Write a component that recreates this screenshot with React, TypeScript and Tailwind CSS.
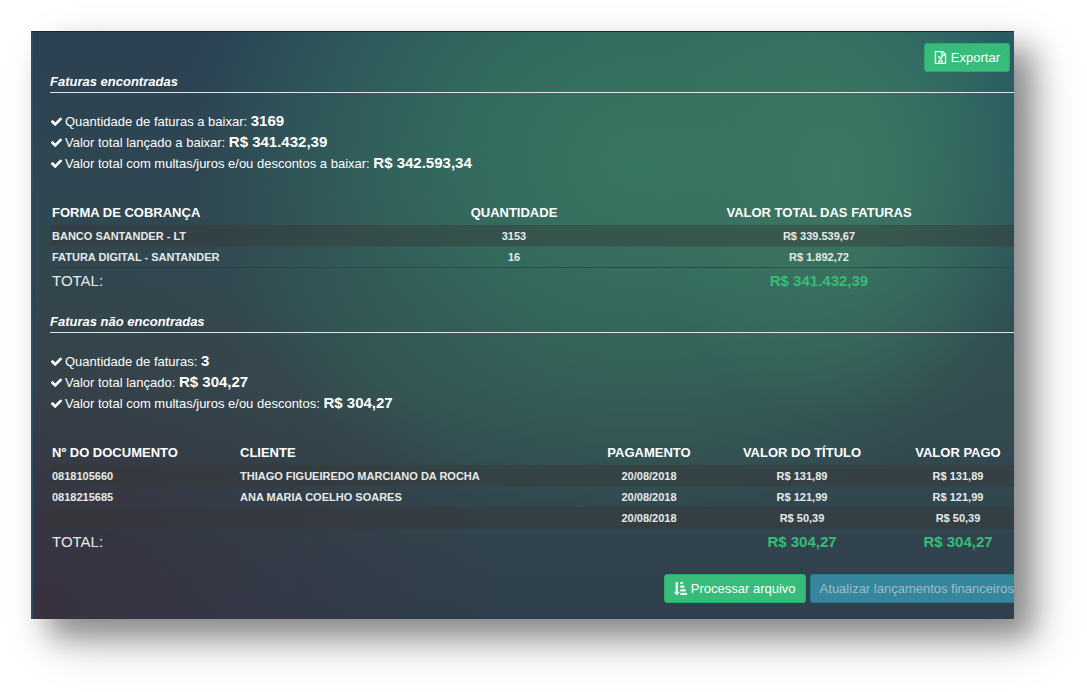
import { clsx } from "clsx";
import type { ComponentPropsWithoutRef, ReactNode } from "react";

interface SummaryItem {
	label: string;
	value: string;
}

interface Column {
	title: string;
	className: string;
	centered?: boolean;
}

interface InvoiceTableProps {
	columns: Column[];
	rows: string[][];
	totals: string[];
}

const foundSummary: SummaryItem[] = [
	{ label: "Quantidade de faturas a baixar:", value: "3169" },
	{ label: "Valor total lançado a baixar:", value: "R$ 341.432,39" },
	{
		label: "Valor total com multas/juros e/ou descontos a baixar:",
		value: "R$ 342.593,34",
	},
];

const foundColumns: Column[] = [
	{ title: "FORMA DE COBRANÇA", className: "w-auto" },
	{ title: "QUANTIDADE", className: "w-[220px]", centered: true },
	{ title: "VALOR TOTAL DAS FATURAS", className: "w-[390px]", centered: true },
];

const foundRows = [
	["BANCO SANTANDER - LT", "3153", "R$ 339.539,67"],
	["FATURA DIGITAL - SANTANDER", "16", "R$ 1.892,72"],
];

const missingSummary: SummaryItem[] = [
	{ label: "Quantidade de faturas:", value: "3" },
	{ label: "Valor total lançado:", value: "R$ 304,27" },
	{
		label: "Valor total com multas/juros e/ou descontos:",
		value: "R$ 304,27",
	},
];

const missingColumns: Column[] = [
	{ title: "Nº DO DOCUMENTO", className: "w-[188px]" },
	{ title: "CLIENTE", className: "w-auto" },
	{ title: "PAGAMENTO", className: "w-[106px]", centered: true },
	{ title: "VALOR DO TÍTULO", className: "w-[200px]", centered: true },
	{ title: "VALOR PAGO", className: "w-[112px]", centered: true },
];

const missingRows = [
	[
		"0818105660",
		"THIAGO FIGUEIREDO MARCIANO DA ROCHA",
		"20/08/2018",
		"R$ 131,89",
		"R$ 131,89",
	],
	[
		"0818215685",
		"ANA MARIA COELHO SOARES",
		"20/08/2018",
		"R$ 121,99",
		"R$ 121,99",
	],
	["", "", "20/08/2018", "R$ 50,39", "R$ 50,39"],
];

function Icon({ children }: { children: ReactNode }) {
	return (
		<svg
			viewBox="0 0 1792 1792"
			className="size-[13px] shrink-0 fill-current"
			aria-hidden="true"
		>
			{children}
		</svg>
	);
}

function CheckIcon() {
	return (
		<Icon>
			<path d="M1671 566q0 40-28 68l-724 724-136 136q-28 28-68 28t-68-28l-136-136-362-362q-28-28-28-68t28-68l136-136q28-28 68-28t68 28l294 295 656-657q28-28 68-28t68 28l136 136q28 28 28 68z" />
		</Icon>
	);
}

function ExcelIcon() {
	return (
		<Icon>
			<path
				className="stroke-current"
				strokeWidth="50"
				d="M1596 380q28 28 48 76t20 88v1152q0 40-28 68t-68 28h-1344q-40 0-68-28t-28-68v-1600q0-40 28-68t68-28h896q40 0 88 20t76 48zm-444-244v376h376q-10-29-22-41l-313-313q-12-12-41-22zm384 1528v-1024h-416q-40 0-68-28t-28-68v-416h-768v1536h1280zm-979-234v106h281v-106h-75l103-161q5-7 10-16.5t7.5-13.5 3.5-4h2q1 4 5 10 2 4 4.5 7.5t6 8 6.5 8.5l107 161h-76v106h291v-106h-68l-192-273 195-282h67v-107h-279v107h74l-103 159q-4 7-10 16.5t-9 13.5l-2 3h-2q-1-4-5-10-6-11-17-23l-106-159h76v-107h-290v107h68l189 272-194 283h-68z"
			/>
		</Icon>
	);
}

function SortIcon() {
	return (
		<Icon>
			<path
				className="stroke-current"
				strokeWidth="50"
				d="M736 1440q0 12-10 24l-319 319q-10 9-23 9-12 0-23-9l-320-320q-15-16-7-35 8-20 30-20h192v-1376q0-14 9-23t23-9h192q14 0 23 9t9 23v1376h192q14 0 23 9t9 23zm1056 128v192q0 14-9 23t-23 9h-832q-14 0-23-9t-9-23v-192q0-14 9-23t23-9h832q14 0 23 9t9 23zm-192-512v192q0 14-9 23t-23 9h-640q-14 0-23-9t-9-23v-192q0-14 9-23t23-9h640q14 0 23 9t9 23zm-192-512v192q0 14-9 23t-23 9h-448q-14 0-23-9t-9-23v-192q0-14 9-23t23-9h448q14 0 23 9t9 23zm-192-512v192q0 14-9 23t-23 9h-256q-14 0-23-9t-9-23v-192q0-14 9-23t23-9h256q14 0 23 9t9 23z"
			/>
		</Icon>
	);
}

function Button({ className, ...props }: ComponentPropsWithoutRef<"button">) {
	return (
		<button
			type="button"
			className={clsx(
				"flex h-[29px] items-center gap-1 border text-[13px] whitespace-nowrap",
				className,
			)}
			{...props}
		/>
	);
}

function SectionTitle({ children }: { children: ReactNode }) {
	return (
		<h2 className="border-b border-[#dfe5e3] text-[13px] leading-5 font-bold italic">
			{children}
		</h2>
	);
}

function SummaryList({ items }: { items: SummaryItem[] }) {
	return (
		<ul className="mt-[18px]">
			{items.map((item) => (
				<li
					key={item.label}
					className="flex h-[21px] items-center gap-0.5 whitespace-nowrap"
				>
					<CheckIcon />
					<span>
						{item.label} <b className="text-[15px] leading-5">{item.value}</b>
					</span>
				</li>
			))}
		</ul>
	);
}

function InvoiceTable({ columns, rows, totals }: InvoiceTableProps) {
	return (
		<table className="mt-[27px] w-full table-fixed text-left whitespace-nowrap">
			<thead>
				<tr className="h-6">
					{columns.map((column) => (
						<th
							key={column.title}
							className={clsx(
								"px-0.5 text-[13px] font-bold",
								column.className,
								column.centered && "text-center",
							)}
						>
							{column.title}
						</th>
					))}
				</tr>
			</thead>
			<tbody className="text-[11px] leading-4 font-bold">
				{rows.map((row) => (
					<tr
						key={row.join("-")}
						className="h-[21px] border-t border-[#37474a]/30 odd:bg-[#383838]/45"
					>
						{row.map((cell, index) => (
							<td
								key={columns[index].title}
								className={clsx(
									"px-0.5 text-[#e6ebea]",
									columns[index].centered && "text-center",
								)}
							>
								{cell}
							</td>
						))}
					</tr>
				))}
			</tbody>
			<tfoot>
				<tr className="h-7 border-t border-[#2b403f]/70 text-[15px]">
					{totals.map((total, index) => (
						<td
							key={columns[index].title}
							className={clsx(
								"px-0.5",
								columns[index].centered
									? "text-center font-bold text-[#37bc78]"
									: "text-[#e6ebea]",
							)}
						>
							{total}
						</td>
					))}
				</tr>
			</tfoot>
		</table>
	);
}

export default function App() {
	return (
		<div className="bg-white pt-[31px] pr-[73px] pb-[73px] pl-[31px] font-['Liberation_Sans',Arial,sans-serif]">
			<main className="overflow-hidden border-t border-l-2 border-t-[#1b2b2c] border-l-[#2a4e66] bg-[#304450] bg-[radial-gradient(ellipse_20%_42%_at_82%_24%,#3d7862_0%,#3d786200_100%),radial-gradient(ellipse_46%_62%_at_62%_22%,#397660_0%,#35705fd0_40%,#30655c00_100%),radial-gradient(ellipse_65%_60%_at_80%_0%,#25616a_0%,#25616a00_100%),radial-gradient(ellipse_48%_68%_at_0%_100%,#38313f_0%,#38313f00_100%),linear-gradient(180deg,#2b4153_0%,#344d50_60%,#2f3f4d_100%)] pb-4 pl-[17px] text-[13px] text-white shadow-[18px_18px_26px_rgba(0,0,0,0.32),22px_22px_46px_rgba(0,0,0,0.22)]">
				<div className="flex justify-end pt-[11px] pr-1">
					<Button className="rounded-[3px] border-[#29ac6c] bg-[#37bc7b] px-[9px]">
						<ExcelIcon />
						Exportar
					</Button>
				</div>

				<section>
					<SectionTitle>Faturas encontradas</SectionTitle>
					<SummaryList items={foundSummary} />
					<InvoiceTable
						columns={foundColumns}
						rows={foundRows}
						totals={["TOTAL:", "", "R$ 341.432,39"]}
					/>
				</section>

				<section className="mt-[17px]">
					<SectionTitle>Faturas não encontradas</SectionTitle>
					<SummaryList items={missingSummary} />
					<InvoiceTable
						columns={missingColumns}
						rows={missingRows}
						totals={["TOTAL:", "", "", "R$ 304,27", "R$ 304,27"]}
					/>
				</section>

				<div className="mt-[18px] flex justify-end gap-1">
					<Button className="rounded-[3px] border-[#29ac6c] bg-[#37bc7b] px-[9px]">
						<SortIcon />
						Processar arquivo
					</Button>
					<Button
						disabled
						className="rounded-l-[3px] border-r-0 border-[#297991] bg-[#36869e] pl-[9px] text-[#9fbcc6]"
					>
						Atualizar lançamentos financeiros
					</Button>
				</div>
			</main>
		</div>
	);
}
